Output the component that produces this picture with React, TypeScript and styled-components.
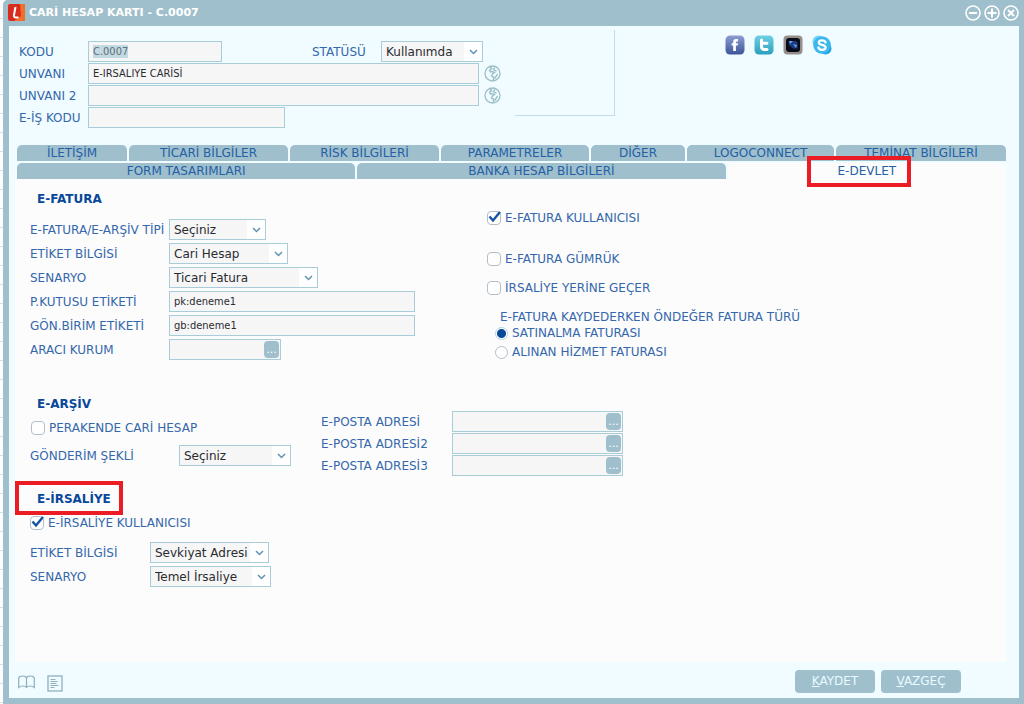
import React, { useEffect, useId, useRef } from "react";
import styled, { createGlobalStyle } from "styled-components";

const color = {
  frame: "#9fbfcc",
  surface: "#f0fcff",
  panel: "#fcfcfd",
  field: "#f6f6f7",
  fieldBorder: "#a9ccd9",
  label: "#3467ab",
  heading: "#08489a",
  text: "#2b2b2f",
  mark: "#ec1c24",
};

const GlobalStyle = createGlobalStyle`
  *, *::before, *::after { box-sizing: border-box; }
  body {
    margin: 0;
    background: #fdfdfe;
    color: ${color.label};
    font: 12px/16px "DejaVu Sans", Verdana, sans-serif;
  }
  button, input, select { font: inherit; margin: 0; }
`;

const Desktop = styled.div`
  display: flex;
  min-height: 100vh;
  padding-left: 3px;
  background: repeating-linear-gradient(#fdfdfe 0 18px, #d5dfe3 18px 19px);
`;

const Window = styled.main`
  flex: 1;
  display: flex;
  flex-direction: column;
  min-width: 0;
  border: solid ${color.frame};
  border-width: 0 5px 6px 6px;
  border-radius: 5px 0 0 0;
  background: ${color.surface};
`;

const TitleBar = styled.header`
  display: flex;
  align-items: center;
  gap: 4px;
  height: 26px;
  margin: 0 -5px 0 -6px;
  padding: 0 5px 1px;
  border-radius: 5px 0 0 0;
  background: ${color.frame};
  color: #fff;
`;

const Title = styled.h1`
  flex: 1;
  margin: 0;
  font-size: 11px;
  line-height: 16px;
`;

const IconButton = styled.button`
  display: flex;
  padding: 0;
  border: 0;
  background: none;
  color: inherit;
`;

const WindowButtons = styled.div`
  display: flex;
  gap: 3px;
`;

const CardHeader = styled.section`
  display: flex;
  align-items: flex-start;
  height: 119px;
  padding: 4px 11px 0 10px;
`;

const CardFields = styled.div`
  display: flex;
  flex-direction: column;
  gap: 1px;
  width: 496px;
  padding-top: 11px;
`;

const Row = styled.div`
  display: flex;
  align-items: center;
  height: 21px;
`;

const Label = styled.label<{ $width: number }>`
  flex: none;
  width: ${(p) => p.$width}px;
  white-space: nowrap;
`;

const StatusLabel = styled(Label)`
  margin-left: 90px;
`;

const TextInput = styled.input<{ $width: number }>`
  width: ${(p) => p.$width}px;
  height: 21px;
  padding: 0 4px;
  border: 1px solid ${color.fieldBorder};
  border-radius: 0;
  outline: 0;
  background: ${color.field};
  color: ${color.text};
  font-family: "DejaVu Sans Condensed", Tahoma, sans-serif;
  font-size: 11px;

  &::selection {
    background: #c3dae2;
    color: #5f6e76;
  }
`;

const SelectBox = styled.div<{ $width: number }>`
  position: relative;
  width: ${(p) => p.$width}px;
  height: 21px;

  select {
    width: 100%;
    height: 100%;
    padding: 0 18px 0 4px;
    border: 1px solid ${color.fieldBorder};
    border-radius: 0;
    outline: 0;
    appearance: none;
    background: linear-gradient(to right, ${color.field} calc(100% - 18px), #fff 0);
    color: ${color.text};
  }

  svg {
    position: absolute;
    top: 8px;
    right: 5px;
    pointer-events: none;
  }
`;

const TranslateButton = styled(IconButton)`
  margin-left: 5px;
  color: #9dbfc9;
`;

const Photo = styled.div`
  width: 100px;
  height: 86px;
  border: solid #c3dce7;
  border-width: 0 1px 1px 0;
`;

const SocialLinks = styled.nav`
  display: flex;
  gap: 9px;
  margin: 5px 0 0 110px;

  a { display: flex; }
`;

const Tabs = styled.div`
  display: flex;
  flex-direction: column;
  gap: 2px;
  padding: 0 13px 0 8px;
`;

const TabRow = styled.div`
  display: flex;
  gap: 2px;
`;

const Tab = styled.button<{ $share: number; $active?: boolean }>`
  flex: ${(p) => p.$share} 1 0;
  min-width: 0;
  height: 16px;
  padding: 0;
  border: 0;
  border-radius: 5px 5px 0 0;
  background: ${(p) => (p.$active ? color.panel : color.frame)};
  color: #2460a6;
  line-height: 16px;
  white-space: nowrap;
`;

const Marked = styled.span<{ $inset: string }>`
  position: relative;

  &::after {
    content: "";
    position: absolute;
    inset: ${(p) => p.$inset};
    border: 4px solid ${color.mark};
    pointer-events: none;
  }
`;

const Panel = styled.div`
  flex: 1;
  margin: 0 13px 0 6px;
  padding: 12px 15px;
  background: ${color.panel};
`;

const Section = styled.section<{ $left: number; $space: number }>`
  display: grid;
  grid-template-columns: minmax(0, ${(p) => p.$left}px) 1fr;
  align-items: start;
  margin-bottom: ${(p) => p.$space}px;
`;

const Heading = styled.h2`
  margin: 0 0 0 7px;
  color: ${color.heading};
  font-size: 12px;
  line-height: 16px;
`;

const Fields = styled.div<{ $top?: number; $gap?: number }>`
  display: flex;
  flex-direction: column;
  gap: ${(p) => p.$gap ?? 3}px;
  padding-top: ${(p) => p.$top ?? 0}px;
`;

const CheckLabel = styled.label<{ $top?: number; $indent?: number }>`
  display: flex;
  align-items: center;
  gap: 4px;
  height: 18px;
  margin: ${(p) => p.$top ?? 0}px 0 0 ${(p) => p.$indent ?? 0}px;
`;

const Tick = styled.span`
  position: relative;
  display: flex;

  input {
    width: 14px;
    height: 14px;
    border: 1px solid #b3bfc8;
    border-radius: 4px;
    appearance: none;
    background: #fff;
  }

  svg {
    position: absolute;
    top: 0;
    left: 0;
    display: none;
    pointer-events: none;
  }

  input:checked + svg { display: block; }
`;

const Radio = styled.input`
  width: 13px;
  height: 13px;
  border: 1px solid #b3bfc8;
  border-radius: 50%;
  appearance: none;
  background: #fff;

  &:checked {
    border-color: #b5d2e4;
    background: radial-gradient(circle, #08489a 4px, #fff 5px);
  }
`;

const RadioGroup = styled.fieldset`
  margin: 13px 0 0 8px;
  padding: 0;
  border: 0;

  legend {
    padding: 0 0 0 5px;
    line-height: 14px;
    white-space: nowrap;
  }
`;

const LookupBox = styled.div`
  position: relative;
  display: flex;
`;

const LookupButton = styled.button`
  position: absolute;
  top: 2px;
  right: 2px;
  width: 15px;
  height: 17px;
  padding: 0;
  border: 0;
  border-radius: 4px;
  background: ${color.frame};
  color: #fff;
  font-size: 11px;
  line-height: 16px;
`;

const Footer = styled.footer`
  display: flex;
  align-items: center;
  gap: 6px;
  height: 36px;
  padding: 2px 58px 0 9px;
`;

const FooterTools = styled.div`
  flex: 1;
  display: flex;
  gap: 12px;
  padding-top: 4px;
  color: #8fb0bf;
`;

const ActionButton = styled.button`
  width: 80px;
  height: 23px;
  padding: 0;
  border: 0;
  border-radius: 4px;
  background: ${color.frame};
  color: #e9fbff;
`;

const LogoMark = () => (
  <svg width="17" height="17" viewBox="0 0 17 17" aria-hidden="true">
    <rect width="17" height="17" rx="2" fill="#d92b1e" />
    <path d="M12 0h3q2 0 2 2v13q0 2-2 2H6l7-5z" fill="#f0702a" />
    <path d="M7.500 3 6 11q-.4 2.500 2 2.500h2.500" fill="none" stroke="#fff" strokeWidth="2" />
  </svg>
);

const CircleIcon = ({ d }: { d: string }) => (
  <svg width="16" height="16" viewBox="0 0 16 16" fill="none" stroke="#fff" strokeWidth="1.600" aria-hidden="true">
    <circle cx="8" cy="8" r="7" />
    <path d={d} strokeWidth="2" />
  </svg>
);

const Globe = () => (
  <svg width="17" height="17" viewBox="0 0 17 17" fill="none" stroke="currentColor" aria-hidden="true">
    <circle cx="8.500" cy="8.500" r="7.500" strokeWidth="1.300" />
    <path d="M8 1.500 6.500 3l1 1-2 1.500 1 1.500 2-.5 2 1-2 1.500-1 2 2 1v3M11 2.500 9.500 4l1 1.500 2 .5M10.500 13.500l1.500-2 1.500-2.500" strokeWidth="1.400" />
  </svg>
);

const Facebook = () => (
  <svg width="20" height="20" viewBox="0 0 20 20" aria-hidden="true">
    <defs>
      <linearGradient id="fb" x2="0" y2="1">
        <stop stopColor="#8d9ed0" />
        <stop offset="1" stopColor="#3c5499" />
      </linearGradient>
    </defs>
    <rect x=".5" y=".5" width="19" height="19" rx="4.500" fill="url(#fb)" />
    <path d="M8.200 16V10.600H6.600V8.200h1.600V6.700Q8.200 4 11 4h2v2.400h-1.200q-.9 0-.9.9v.9H13l-.3 2.400h-1.800V16z" fill="#fff" />
  </svg>
);

const Twitter = () => (
  <svg width="20" height="20" viewBox="0 0 20 20" aria-hidden="true">
    <defs>
      <linearGradient id="tw" x2="0" y2="1">
        <stop stopColor="#6fd0e2" />
        <stop offset="1" stopColor="#2a9fc0" />
      </linearGradient>
    </defs>
    <rect x=".5" y=".5" width="19" height="19" rx="4.500" fill="url(#tw)" />
    <path d="M7.500 5v6.500q0 3 3 3h2.500M7.500 8.200H13" fill="none" stroke="#fff" strokeWidth="3" strokeLinecap="round" />
  </svg>
);

const Camera = () => (
  <svg width="20" height="20" viewBox="0 0 20 20" aria-hidden="true">
    <rect x=".5" y=".5" width="19" height="19" rx="4" fill="#968e8a" />
    <rect x="3" y="3" width="14" height="14" rx="3" fill="#090d1a" />
    <path d="M5.500 6H13l1.500 2v5.500H10L6 10z" fill="#1c3c80" />
    <path d="M6 6h4L7 9zM10 9l4 1-1 3z" fill="#6f9ce6" />
  </svg>
);

const Skype = () => (
  <svg width="20" height="20" viewBox="0 0 20 20" aria-hidden="true">
    <circle cx="6.500" cy="6.500" r="6" fill="#7ad6f5" />
    <circle cx="13.500" cy="13.500" r="6" fill="#1fa3e2" />
    <circle cx="10" cy="10" r="8.800" fill="#3db8ee" />
    <path d="M13.500 7.300Q12.800 5.300 10 5.300 6.800 5.300 6.800 7.500q0 1.700 3.200 2.300 3.600.7 3.600 2.700 0 2.300-3.400 2.300-3 0-3.800-2.300" fill="none" stroke="#fff" strokeWidth="2.300" strokeLinecap="round" />
  </svg>
);

const Book = () => (
  <svg width="17" height="14" viewBox="0 0 17 14" fill="none" stroke="currentColor" aria-hidden="true">
    <path d="M8.500 3Q8 1 5 1 1.500 1 .7 3v9.500Q2.500 11 5 11q2.500 0 3.500 1.500Q9.500 11 12 11q2.500 0 4.300 1.500V3Q15.500 1 12 1 9 1 8.500 3v9.500" strokeWidth="1.200" />
  </svg>
);

const Note = () => (
  <svg width="16" height="17" viewBox="0 0 16 17" fill="none" stroke="currentColor" aria-hidden="true">
    <rect x="1" y="1" width="14" height="15" strokeWidth="1.300" />
    <path d="M3.500 4.500h5M3.500 6.500h7M3.500 8.500h6M3.500 10.500h8M3.500 12.500h4" strokeWidth="1.200" />
  </svg>
);

type SelectProps = { label: string; labelWidth: number; width: number; value: string };

const Select = ({ id, width, value }: { id: string; width: number; value: string }) => (
  <SelectBox $width={width}>
    <select id={id} defaultValue={value}>
      <option>{value}</option>
    </select>
    <svg width="9" height="6" viewBox="0 0 9 6" fill="none" stroke="#5e93b5" strokeWidth="1.500" aria-hidden="true">
      <path d="m1 1 3.500 3.500L8 1" />
    </svg>
  </SelectBox>
);

const SelectRow = ({ label, labelWidth, width, value }: SelectProps) => {
  const id = useId();
  return (
    <Row>
      <Label htmlFor={id} $width={labelWidth}>{label}</Label>
      <Select id={id} width={width} value={value} />
    </Row>
  );
};

type TextRowProps = {
  label: string;
  labelWidth: number;
  width: number;
  value?: string;
  lookup?: boolean;
  children?: React.ReactNode;
};

const TextRow = ({ label, labelWidth, width, value = "", lookup, children }: TextRowProps) => {
  const id = useId();
  return (
    <Row>
      <Label htmlFor={id} $width={labelWidth}>{label}</Label>
      <LookupBox>
        <TextInput id={id} $width={width} defaultValue={value} />
        {lookup && <LookupButton aria-label={`${label} seç`}>...</LookupButton>}
      </LookupBox>
      {children}
    </Row>
  );
};

type CheckProps = { label: string; checked?: boolean; top?: number; indent?: number };

const Check = ({ label, checked, top, indent }: CheckProps) => (
  <CheckLabel $top={top} $indent={indent}>
    <Tick>
      <input type="checkbox" defaultChecked={checked} />
      <svg width="14" height="14" viewBox="0 0 14 14" fill="none" stroke="#1454a0" strokeWidth="2.400" aria-hidden="true">
        <path d="m2.500 5.500 3.500 4L13 1" />
      </svg>
    </Tick>
    {label}
  </CheckLabel>
);

const topTabs: [string, number][] = [
  ["İLETİŞİM", 110],
  ["TİCARİ BİLGİLER", 159],
  ["RİSK BİLGİLERİ", 149],
  ["PARAMETRELER", 148],
  ["DİĞER", 94],
  ["LOGOCONNECT", 147],
  ["TEMİNAT BİLGİLERİ", 170],
];

export default function App() {
  const code = useRef<HTMLInputElement>(null);

  useEffect(() => {
    code.current?.focus();
    code.current?.select();
  }, []);

  return (
    <>
      <GlobalStyle />
      <Desktop>
        <Window>
          <TitleBar>
            <LogoMark />
            <Title>CARİ HESAP KARTI - C.0007</Title>
            <WindowButtons>
              <IconButton aria-label="Küçült"><CircleIcon d="M4 8h8" /></IconButton>
              <IconButton aria-label="Büyüt"><CircleIcon d="M3.500 8h9M8 3.500v9" /></IconButton>
              <IconButton aria-label="Kapat"><CircleIcon d="m5 5 6 6M11 5l-6 6" /></IconButton>
            </WindowButtons>
          </TitleBar>

          <CardHeader>
            <CardFields>
              <Row>
                <Label htmlFor="code" $width={69}>KODU</Label>
                <TextInput id="code" ref={code} $width={134} defaultValue="C.0007" />
                <StatusLabel htmlFor="status" $width={69}>STATÜSÜ</StatusLabel>
                <Select id="status" width={102} value="Kullanımda" />
              </Row>
              <TextRow label="UNVANI" labelWidth={69} width={391} value="E-IRSALIYE CARİSİ">
                <TranslateButton aria-label="Unvan çevirisi"><Globe /></TranslateButton>
              </TextRow>
              <TextRow label="UNVANI 2" labelWidth={69} width={391}>
                <TranslateButton aria-label="Unvan 2 çevirisi"><Globe /></TranslateButton>
              </TextRow>
              <TextRow label="E-İŞ KODU" labelWidth={69} width={197} />
            </CardFields>
            <Photo />
            <SocialLinks>
              <a href="#facebook" aria-label="Facebook"><Facebook /></a>
              <a href="#twitter" aria-label="Twitter"><Twitter /></a>
              <a href="#foto" aria-label="Fotoğraf"><Camera /></a>
              <a href="#skype" aria-label="Skype"><Skype /></a>
            </SocialLinks>
          </CardHeader>

          <Tabs>
            <TabRow>
              {topTabs.map(([name, share]) => (
                <Tab key={name} $share={share}>{name}</Tab>
              ))}
            </TabRow>
            <TabRow>
              <Tab $share={339}>FORM TASARIMLARI</Tab>
              <Tab $share={369}>BANKA HESAP BİLGİLERİ</Tab>
              <Tab $share={279} $active>
                <Marked $inset="-8px -15px -9px -31px">E-DEVLET</Marked>
              </Tab>
            </TabRow>
          </Tabs>

          <Panel>
            <Section $left={457} $space={35}>
              <div>
                <Heading>E-FATURA</Heading>
                <Fields $top={12}>
                  <SelectRow label="E-FATURA/E-ARŞİV TİPİ" labelWidth={139} width={97} value="Seçiniz" />
                  <SelectRow label="ETİKET BİLGİSİ" labelWidth={139} width={119} value="Cari Hesap" />
                  <SelectRow label="SENARYO" labelWidth={139} width={149} value="Ticari Fatura" />
                  <TextRow label="P.KUTUSU ETİKETİ" labelWidth={139} width={246} value="pk:deneme1" />
                  <TextRow label="GÖN.BİRİM ETİKETİ" labelWidth={139} width={246} value="gb:deneme1" />
                  <TextRow label="ARACI KURUM" labelWidth={139} width={112} lookup />
                </Fields>
              </div>
              <div>
                <Check label="E-FATURA KULLANICISI" checked top={18} />
                <Check label="E-FATURA GÜMRÜK" top={23} />
                <Check label="İRSALİYE YERİNE GEÇER" top={11} />
                <RadioGroup>
                  <legend>E-FATURA KAYDEDERKEN ÖNDEĞER FATURA TÜRÜ</legend>
                  <CheckLabel>
                    <Radio type="radio" name="invoice" defaultChecked />
                    SATINALMA FATURASI
                  </CheckLabel>
                  <CheckLabel $top={1}>
                    <Radio type="radio" name="invoice" />
                    ALINAN HİZMET FATURASI
                  </CheckLabel>
                </RadioGroup>
              </div>
            </Section>

            <Section $left={291} $space={15}>
              <div>
                <Heading>E-ARŞİV</Heading>
                <Check label="PERAKENDE CARİ HESAP" top={7} indent={1} />
                <Fields $top={8}>
                  <SelectRow label="GÖNDERİM ŞEKLİ" labelWidth={149} width={112} value="Seçiniz" />
                </Fields>
              </div>
              <Fields $top={15} $gap={1}>
                <TextRow label="E-POSTA ADRESİ" labelWidth={131} width={171} lookup />
                <TextRow label="E-POSTA ADRESİ2" labelWidth={131} width={171} lookup />
                <TextRow label="E-POSTA ADRESİ3" labelWidth={131} width={171} lookup />
              </Fields>
            </Section>

            <Section $left={457} $space={0}>
              <div>
                <Heading><Marked $inset="-11px -12px -9px -22px">E-İRSALİYE</Marked></Heading>
                <Check label="E-İRSALİYE KULLANICISI" checked top={7} />
                <Fields $top={10}>
                  <SelectRow label="ETİKET BİLGİSİ" labelWidth={120} width={119} value="Sevkiyat Adresi" />
                  <SelectRow label="SENARYO" labelWidth={120} width={121} value="Temel İrsaliye" />
                </Fields>
              </div>
            </Section>
          </Panel>

          <Footer>
            <FooterTools>
              <IconButton aria-label="Kayıt bilgisi"><Book /></IconButton>
              <IconButton aria-label="Notlar"><Note /></IconButton>
            </FooterTools>
            <ActionButton><u>K</u>AYDET</ActionButton>
            <ActionButton><u>V</u>AZGEÇ</ActionButton>
          </Footer>
        </Window>
      </Desktop>
    </>
  );
}
